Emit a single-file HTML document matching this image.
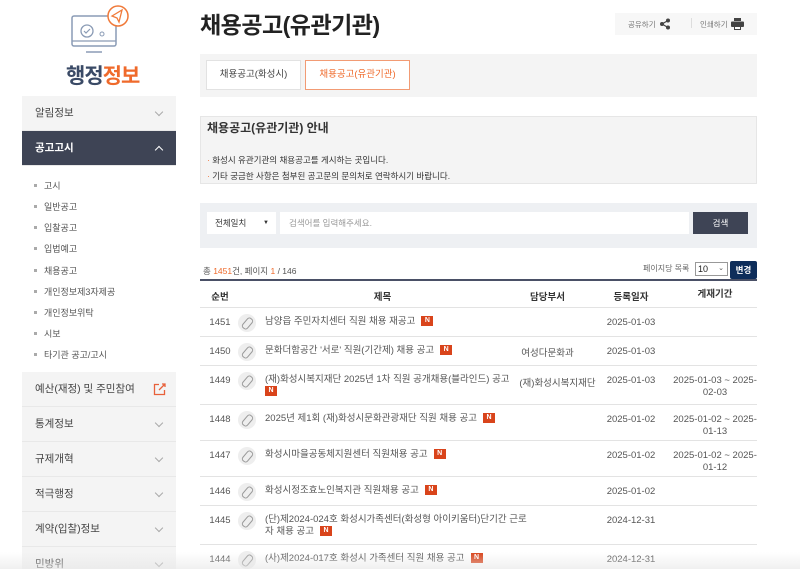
<!DOCTYPE html>
<html><head><meta charset="utf-8"><style>
*{margin:0;padding:0;box-sizing:border-box}
html,body{width:800px;height:569px;overflow:hidden}
body{background:#fff;font-family:"Liberation Sans","Noto Sans CJK KR",sans-serif;color:#333;position:relative;font-size:10px}
.abs{position:absolute}
.side{left:22px;top:0;width:154px;height:569px;background:#fff}
.mi{position:absolute;left:22px;width:154px;height:35px;background:#f4f4f4;border-bottom:1px solid #e8e8e8;font-size:10.5px;color:#444;padding-left:13px;line-height:35px}
.mi .ch{position:absolute;right:14px;top:13px;width:6px;height:6px;border-right:1px solid #aaa;border-bottom:1px solid #aaa;transform:rotate(45deg)}
.sub{position:absolute;left:35px;font-size:9px;color:#555}
.sub:before{content:"";position:absolute;left:-1px;top:5px;width:3px;height:3px;background:#aaa}
.sub span{padding-left:9px}
.row{position:absolute;left:200px;width:557px;border-bottom:1px solid #e3e3e3;font-size:9.5px;color:#555}
.row .n{position:absolute;left:8px;width:24px;text-align:center}
.row .c{position:absolute;left:38px;width:18px;height:18px;border-radius:50%;background:#eee}
.row .c:after{content:"";position:absolute;left:6px;top:3px;width:5px;height:11px;border:1.5px solid #999;border-radius:3px;transform:rotate(40deg)}
.row .t{position:absolute;left:65px;width:260px;line-height:12px}
.row .d{position:absolute;left:300px;width:95px;text-align:center}
.row .r{position:absolute;left:400px;width:62px;text-align:center}
.row .p{position:absolute;left:470px;width:90px;text-align:center;line-height:12px}
.N{display:inline-block;width:12px;height:10px;background:#d9441b;color:#fff;font-size:7px;font-weight:bold;text-align:center;line-height:10px;margin-left:6px;vertical-align:middle}
</style></head><body>
<div class="abs side"></div>
<svg class="abs" style="left:66px;top:4px" width="70" height="50" viewBox="0 0 70 50">
<rect x="6" y="12" width="44" height="30" rx="2" fill="none" stroke="#8a9bb5" stroke-width="1.5"/>
<line x1="6" y1="37" x2="50" y2="37" stroke="#8a9bb5" stroke-width="1.2"/>
<line x1="20" y1="48" x2="36" y2="48" stroke="#8a9bb5" stroke-width="1.5"/>
<circle cx="21" cy="27" r="6" fill="none" stroke="#8a9bb5" stroke-width="1.3"/>
<path d="M18 27l2 2 4-4" fill="none" stroke="#8a9bb5" stroke-width="1.2"/>
<circle cx="36" cy="30" r="2" fill="none" stroke="#8a9bb5"/>
<circle cx="52" cy="12" r="10" fill="#fff" stroke="#f07a3a" stroke-width="1.5"/>
<path d="M46 12l10-6-3 12-2-4z" fill="none" stroke="#f07a3a" stroke-width="1.3"/>
</svg>
<div class="abs" style="left:66px;top:60px;font-size:21px;font-weight:bold;letter-spacing:-1px"><span style="color:#3a4a66">행정</span><span style="color:#ef6a2b">정보</span></div>
<div class="mi" style="top:96px">알림정보<i class="ch"></i></div>
<div class="mi" style="top:131px;background:#3e4455;color:#fff;font-weight:bold">공고고시<i class="ch" style="border-color:#fff;transform:rotate(225deg);top:16px"></i></div>
<div class="sub" style="top:179px"><span>고시</span></div>
<div class="sub" style="top:200px"><span>일반공고</span></div>
<div class="sub" style="top:221px"><span>입찰공고</span></div>
<div class="sub" style="top:242px"><span>입법예고</span></div>
<div class="sub" style="top:264px"><span>채용공고</span></div>
<div class="sub" style="top:285px"><span>개인정보제3자제공</span></div>
<div class="sub" style="top:306px"><span>개인정보위탁</span></div>
<div class="sub" style="top:327px"><span>시보</span></div>
<div class="sub" style="top:348px"><span>타기관 공고/고시</span></div>
<div class="mi" style="top:372px">예산(재정) 및 주민참여<svg class="abs" style="right:10px;top:11px" width="13" height="13"><path d="M6 1.5H1.5v10h10V7" fill="none" stroke="#e8603a" stroke-width="1.3"/><path d="M6 7l6-6M9 1h3v3" fill="none" stroke="#e8603a" stroke-width="1.3"/></svg></div>
<div class="mi" style="top:407px">통계정보<i class="ch"></i></div>
<div class="mi" style="top:442px">규제개혁<i class="ch"></i></div>
<div class="mi" style="top:477px">적극행정<i class="ch"></i></div>
<div class="mi" style="top:512px">계약(입찰)정보<i class="ch"></i></div>
<div class="mi" style="top:547px">민방위<i class="ch"></i></div>

<div class="abs" style="left:200px;top:6px;font-size:23px;font-weight:bold;color:#222;letter-spacing:-0.5px">채용공고(유관기관)</div>
<div class="abs" style="left:615px;top:13px;width:142px;height:22px;background:#f7f7f7;font-size:7.5px;color:#777">
<span class="abs" style="left:13px;top:6px">공유하기</span>
<svg class="abs" style="left:44px;top:5px" width="12" height="12"><circle cx="9" cy="2.5" r="2" fill="#444"/><circle cx="3" cy="6" r="2" fill="#444"/><circle cx="9" cy="9.5" r="2" fill="#444"/><path d="M9 2.5L3 6l6 3.5" stroke="#444" stroke-width="1.2" fill="none"/></svg>
<span class="abs" style="left:76px;top:5px;width:1px;height:10px;background:#ddd"></span>
<span class="abs" style="left:85px;top:6px">인쇄하기</span>
<svg class="abs" style="left:116px;top:5px" width="13" height="12"><rect x="3" y="0" width="7" height="3" fill="#444"/><rect x="0" y="3.5" width="13" height="5.5" rx="1" fill="#444"/><rect x="3" y="8" width="7" height="4" fill="#444"/><rect x="4" y="9" width="5" height="2" fill="#fff"/></svg>
</div>
<div class="abs" style="left:200px;top:54px;width:557px;height:43px;background:#f4f4f4"></div>
<div class="abs" style="left:206px;top:60px;width:95px;height:30px;background:#fff;border:1px solid #e2e2e2;font-size:9.5px;text-align:center;line-height:28px;color:#444">채용공고(화성시)</div>
<div class="abs" style="left:305px;top:60px;width:105px;height:30px;background:#fff;border:1px solid #f29b74;font-size:9.5px;text-align:center;line-height:28px;color:#ef6a2b">채용공고(유관기관)</div>
<div class="abs" style="left:200px;top:116px;width:557px;height:68px;background:#f4f4f4;border:1px solid #e6e6e6"></div>
<div class="abs" style="left:207px;top:119px;font-size:12px;font-weight:bold;color:#333">채용공고(유관기관) 안내</div>
<div class="abs" style="left:207px;top:154px;font-size:8.5px;color:#333"><span style="color:#ef6a2b">·</span> 화성시 유관기관의 채용공고를 게시하는 곳입니다.</div>
<div class="abs" style="left:207px;top:170px;font-size:8.5px;color:#333"><span style="color:#ef6a2b">·</span> 기타 궁금한 사항은 첨부된 공고문의 문의처로 연락하시기 바랍니다.</div>
<div class="abs" style="left:200px;top:203px;width:557px;height:45px;background:#eef0f3"></div>
<div class="abs" style="left:207px;top:212px;width:69px;height:22px;background:#fff;font-size:8.5px;line-height:22px;padding-left:8px;color:#333">전체일치<span class="abs" style="left:56px;top:0;font-size:6px">▼</span></div>
<div class="abs" style="left:280px;top:212px;width:409px;height:22px;background:#fff;font-size:8.5px;line-height:22px;padding-left:9px;color:#999">검색어를 입력해주세요.</div>
<div class="abs" style="left:693px;top:212px;width:55px;height:22px;background:#3e4455;font-size:8.5px;line-height:22px;text-align:center;color:#fff">검색</div>
<div class="abs" style="left:203px;top:265px;font-size:8.5px;color:#555">총 <span style="color:#ef6a2b">1451</span>건, 페이지 <span style="color:#ef6a2b">1</span> / 146</div>
<div class="abs" style="left:643px;top:263px;font-size:8px;color:#666">페이지당 목록</div>
<div class="abs" style="left:695px;top:262px;width:33px;height:14px;border:1px solid #999;font-size:9px;line-height:12px;padding-left:2px;color:#222">10<span class="abs" style="right:3px;top:0;font-size:7px;color:#555">⌄</span></div>
<div class="abs" style="left:730px;top:261px;width:27px;height:18px;background:#0e2d5a;border-radius:2px;color:#fff;font-size:8.5px;font-weight:bold;text-align:center;line-height:18px">변경</div>
<div class="abs" style="left:200px;top:279px;width:557px;height:2px;background:#4a5066"></div>
<div class="row" style="top:281px;height:27px;font-weight:bold;color:#333;font-size:9.5px"><span class="n" style="top:8px;left:6px;width:28px">순번</span><span class="abs" style="left:160px;top:8px;width:45px;text-align:center">제목</span><span class="d" style="top:8px">담당부서</span><span class="r" style="top:8px">등록일자</span><span class="p" style="top:8px">게재기간</span></div>

<div class="row" style="top:308px;height:29px"><span class="n" style="top:9px">1451</span><span class="c" style="top:6px"></span><span class="t" style="top:8px">남양읍 주민자치센터 직원 채용 재공고<span class="N">N</span></span><span class="r" style="top:9px">2025-01-03</span></div>
<div class="row" style="top:337px;height:29px"><span class="n" style="top:9px">1450</span><span class="c" style="top:6px"></span><span class="t" style="top:8px">문화더함공간 '서로' 직원(기간제) 채용 공고<span class="N">N</span></span><span class="d" style="top:8px">여성다문화과</span><span class="r" style="top:9px">2025-01-03</span></div>
<div class="row" style="top:366px;height:39px"><span class="n" style="top:9px">1449</span><span class="c" style="top:6px"></span><span class="t" style="top:8px;width:250px;white-space:nowrap">(재)화성시복지재단 2025년 1차 직원 공개채용(블라인드) 공고<br><span class="N" style="margin-left:0">N</span></span><span class="d" style="top:9px;left:310px">(재)화성시복지재단</span><span class="r" style="top:9px">2025-01-03</span><span class="p" style="top:9px">2025-01-03 ~ 2025-<br>02-03</span></div>
<div class="row" style="top:405px;height:36px"><span class="n" style="top:9px">1448</span><span class="c" style="top:6px"></span><span class="t" style="top:8px">2025년 제1회 (재)화성시문화관광재단 직원 채용 공고<span class="N">N</span></span><span class="r" style="top:9px">2025-01-02</span><span class="p" style="top:9px">2025-01-02 ~ 2025-<br>01-13</span></div>
<div class="row" style="top:441px;height:36px"><span class="n" style="top:9px">1447</span><span class="c" style="top:6px"></span><span class="t" style="top:8px">화성시마을공동체지원센터 직원채용 공고<span class="N">N</span></span><span class="r" style="top:9px">2025-01-02</span><span class="p" style="top:9px">2025-01-02 ~ 2025-<br>01-12</span></div>
<div class="row" style="top:477px;height:29px"><span class="n" style="top:9px">1446</span><span class="c" style="top:6px"></span><span class="t" style="top:8px">화성시정조효노인복지관 직원채용 공고<span class="N">N</span></span><span class="r" style="top:9px">2025-01-02</span></div>
<div class="row" style="top:506px;height:39px"><span class="n" style="top:9px">1445</span><span class="c" style="top:6px"></span><span class="t" style="top:8px;width:250px;white-space:nowrap">(단)제2024-024호 화성시가족센터(화성형 아이키움터)단기간 근로<br>자 채용 공고<span class="N">N</span></span><span class="r" style="top:9px">2024-12-31</span></div>
<div class="row" style="top:545px;height:29px;border:none"><span class="n" style="top:9px">1444</span><span class="c" style="top:6px"></span><span class="t" style="top:8px">(사)제2024-017호 화성시 가족센터 직원 채용 공고<span class="N">N</span></span><span class="r" style="top:9px">2024-12-31</span></div>
<div class="abs" style="left:0;top:552px;width:800px;height:17px;background:linear-gradient(rgba(240,240,240,0),rgba(230,230,230,0.6))"></div>
</body></html>
